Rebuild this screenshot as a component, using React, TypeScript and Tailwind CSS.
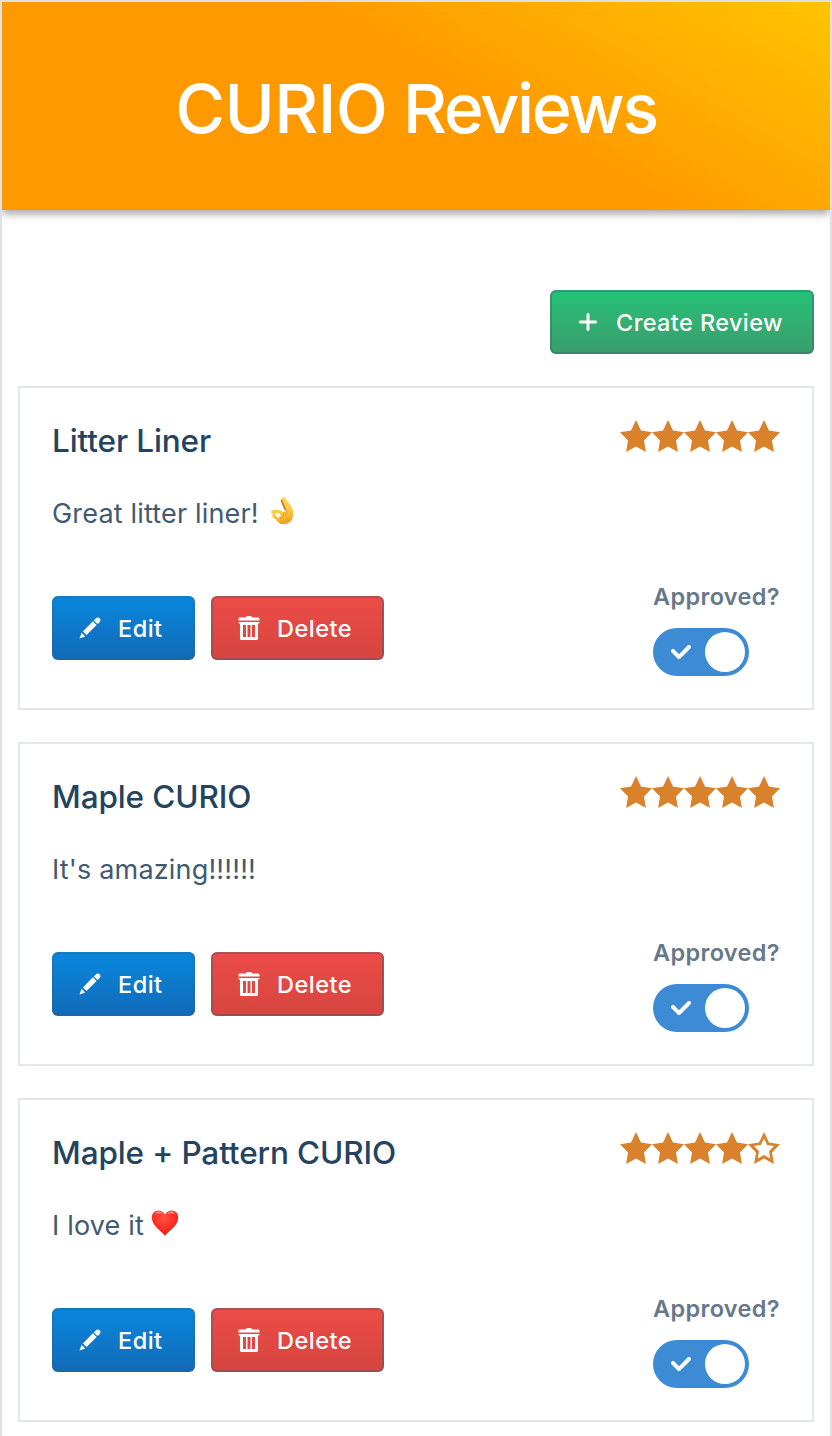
import type { ReactNode } from "react";

const STAR =
  "M16 6.11l-5.53-.84L8 0 5.53 5.27 0 6.11l4 4.1L3.06 16 8 13.27 12.94 16 12 10.21l4-4.1z";
const STAR_HOLE =
  "M4.91 13.2l.59-3.62L3 7.02l3.45-.53L8 3.2l1.55 3.29 3.45.53-2.5 2.56.59 3.62L8 11.49 4.91 13.2z";
const PLUS =
  "M13 7H9V3c0-.55-.45-1-1-1s-1 .45-1 1v4H3c-.55 0-1 .45-1 1s.45 1 1 1h4v4c0 .55.45 1 1 1s1-.45 1-1V9h4c.55 0 1-.45 1-1s-.45-1-1-1z";
const EDIT =
  "M3.25 10.26l2.47 2.47 6.69-6.69-2.46-2.48-6.7 6.7zM.99 14.99l3.86-1.39-2.46-2.44L.99 14.99zm12.25-14c-.48 0-.92.2-1.24.51l-1.44 1.44 2.47 2.47 1.44-1.44c.32-.32.51-.75.51-1.24.01-.95-.77-1.74-1.74-1.74z";
const TRASH =
  "M14.49 3.99h-13c-.28 0-.5.22-.5.5s.22.5.5.5h.5v10c0 .55.45 1 1 1h10c.55 0 1-.45 1-1v-10h.5c.28 0 .5-.22.5-.5s-.22-.5-.5-.5zM5.99 13.99H4v-8h1.99zm3 0H7v-8h1.99zm3 0H10v-8h1.99zM13.99.99h-4c0-.55-.45-1-1-1h-2c-.55 0-1 .45-1 1h-4c-.55 0-1 .45-1 1v1h14v-1c0-.55-.45-1-1-1z";
const TICK =
  "M12 5c-.28 0-.53.11-.71.29L7 9.59l-2.29-2.3a1.003 1.003 0 00-1.42 1.42l3 3c.18.18.43.29.71.29s.53-.11.71-.29l5-5A1.003 1.003 0 0012 5z";

function Icon({ d, className }: { d: string; className: string }) {
  return (
    <svg viewBox="0 0 16 16" className={className} fill="currentColor" fillRule="evenodd">
      <path d={d} />
    </svg>
  );
}

function OkHand() {
  return (
    <svg viewBox="0 0 28 30" className="mb-1.5 ml-2.5 h-[30px] w-7 shrink-0">
      <defs>
        <linearGradient id="skin" x1="0" y1="0" x2="0.3" y2="1">
          <stop offset="0" stopColor="#ffdd67" />
          <stop offset="0.7" stopColor="#fdc93b" />
          <stop offset="1" stopColor="#eba52b" />
        </linearGradient>
      </defs>
      <path d="M11.6 4.8Q12 2.6 13.8 3.4L19 13 15.6 14.6Z" fill="#c98722" />
      <path
        d="M12.8 2.6C13.4.6 16 .6 16.6 2.5L21.8 9.5C24.4 13.5 24.7 18.5 23.4 22.3 21.8 26.8 18 28.6 13.5 28.2 10 27.7 8.5 25.5 6.8 23.4L4 21.6C2.6 20.4 3.2 18.8 4.8 18.8L2.6 17.3C1.2 15.6 2.6 13.8 5 14 8.5 13.2 12.5 13.8 14.8 16.3L17.4 13.6Z"
        fill="url(#skin)"
      />
      <path d="M6.2 17.2Q10.5 16.4 11.9 19.3 10.8 22 8.5 21.6 6.6 20.8 6.2 17.2Z" fill="#fff" />
      <path
        d="M14.7 16.8Q15.2 20.8 11.4 22.6M17.6 13.8Q19.2 16 16.9 18.8"
        fill="none"
        stroke="#d8912a"
        strokeWidth="0.8"
        strokeLinecap="round"
      />
    </svg>
  );
}

function Heart() {
  return (
    <svg viewBox="0 0 28 28" className="mb-1.5 ml-[7px] h-7 w-7 shrink-0">
      <defs>
        <radialGradient id="heart" cx="0.45" cy="0.3" r="0.75">
          <stop offset="0" stopColor="#ff5145" />
          <stop offset="0.6" stopColor="#fb2c22" />
          <stop offset="1" stopColor="#d3140f" />
        </radialGradient>
        <linearGradient id="shine" x1="0" y1="0" x2="0" y2="1">
          <stop offset="0" stopColor="#ffc2b8" />
          <stop offset="1" stopColor="#ff5145" stopOpacity="0" />
        </linearGradient>
      </defs>
      <path
        d="M14 27C11.5 22.6 1 17.5.8 8.8.7 4.4 3.7 1.4 7.4 1.4 10.3 1.4 12.8 3 14 5.8 15.2 3 17.7 1.4 20.6 1.4 24.3 1.4 27.3 4.4 27.2 8.8 27 17.5 16.5 22.6 14 27Z"
        fill="url(#heart)"
      />
      <path d="M3 7C3.6 3.8 5.6 2.4 7.7 2.4 10 2.4 11.7 3.8 12.3 6 9.5 3.8 5.8 4.2 3 7Z" fill="url(#shine)" />
      <path d="M15.7 6C16.3 3.8 18 2.4 20.3 2.4 22.4 2.4 24.4 3.8 25 7 22.2 4.2 18.5 3.8 15.7 6Z" fill="url(#shine)" />
    </svg>
  );
}

function Stars({ rating }: { rating: number }) {
  return (
    <div className="flex text-[#d9822b]">
      {[1, 2, 3, 4, 5].map((n) => (
        <Icon key={n} d={n <= rating ? STAR : STAR + STAR_HOLE} className="size-8" />
      ))}
    </div>
  );
}

function Button({ icon, label, className }: { icon: string; label: string; className: string }) {
  return (
    <button
      className={`flex h-16 items-center rounded-md pl-[26px] text-[23.5px] font-[460] whitespace-nowrap text-white ${className}`}
    >
      <Icon d={icon} className="mr-4 size-6 shrink-0" />
      <span className="pt-0.5">{label}</span>
    </button>
  );
}

function Toggle() {
  return (
    <div className="flex h-12 w-24 items-center justify-between rounded-full bg-[#3d8bd4] pr-1 pl-3 text-white">
      <Icon d={TICK} className="mb-0.5 size-8" />
      <div className="size-10 rounded-full bg-white" />
    </div>
  );
}

interface Review {
  title: string;
  body: string;
  emoji?: ReactNode;
  rating: number;
}

const reviews: Review[] = [
  { title: "Litter Liner", body: "Great litter liner!", emoji: <OkHand />, rating: 5 },
  { title: "Maple CURIO", body: "It's amazing!!!!!!", rating: 5 },
  { title: "Maple + Pattern CURIO", body: "I love it", emoji: <Heart />, rating: 4 },
];

function ReviewCard({ title, body, emoji, rating }: Review) {
  return (
    <article className="flex h-[324px] flex-col border-2 border-[#e4e7eb] p-8">
      <div className="flex items-start justify-between">
        <h2 className="text-[31.5px] leading-[42px] font-medium tracking-[-0.12px] text-[#234361]">{title}</h2>
        <Stars rating={rating} />
      </div>
      <div className="mt-8 flex h-10 items-center text-[27px] tracking-[0.17px] text-[#425a70]">
        <p>{body}</p>
        {emoji}
      </div>
      <div className="mt-auto flex items-start justify-between">
        <div className="mt-4 flex gap-4">
          <Button
            icon={EDIT}
            label="Edit"
            className="w-[143px] bg-linear-to-b from-[#0788de] to-[#116ab8] tracking-[0.5px] shadow-[inset_0_0_0_2px_rgba(67,90,111,0.3)]"
          />
          <Button
            icon={TRASH}
            label="Delete"
            className="w-[173px] bg-linear-to-b from-[#ec4c47] to-[#d64540] tracking-[0.5px] shadow-[inset_0_0_0_2px_rgba(67,90,111,0.38)]"
          />
        </div>
        <div className="w-[127px]">
          <div className="mb-3.5 h-[34px] text-[23.5px] leading-[34px] font-semibold tracking-[0.35px] whitespace-nowrap text-[#66788a]">
            Approved?
          </div>
          <Toggle />
        </div>
      </div>
    </article>
  );
}

export default function App() {
  return (
    <div className="h-[1436px] overflow-hidden border-2 border-b-0 border-[#e0e0e0] bg-white font-['Inter',sans-serif]">
      <header className="flex h-52 items-center justify-center bg-[linear-gradient(30deg,#ff9900_55%,#ffc400)] shadow-[0_4px_8px_rgba(0,0,0,0.35)]">
        <h1 className="pt-1 text-[68px] font-medium tracking-[-2.3px] text-white">
          <span className="tracking-[-0.6px]">CURIO</span> Reviews
        </h1>
      </header>
      <main className="px-4 pt-20">
        <div className="flex justify-end">
          <Button
            icon={PLUS}
            label="Create Review"
            className="w-[264px] bg-linear-to-b from-[#23c277] to-[#399d6c] tracking-[0.4px] shadow-[inset_0_0_0_2px_rgba(67,90,111,0.38)]"
          />
        </div>
        <div className="mt-8 flex flex-col gap-8">
          {reviews.map((review) => (
            <ReviewCard key={review.title} {...review} />
          ))}
        </div>
      </main>
    </div>
  );
}
